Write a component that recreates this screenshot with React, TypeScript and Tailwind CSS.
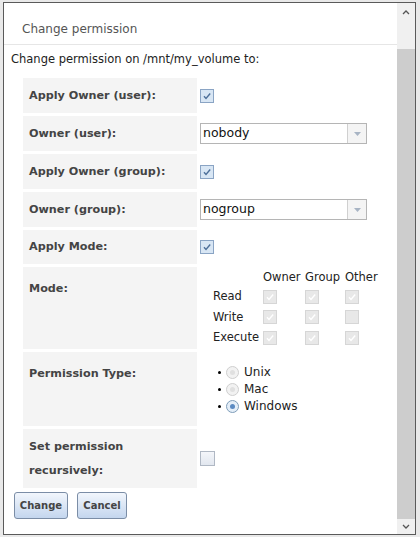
const Check = ({ on = true, dim = false }: { on?: boolean; dim?: boolean }) => (
  <span
    className={`inline-flex h-[14px] w-[14px] items-center justify-center border ${
      dim ? 'border-[#d6d6d6] bg-[#e8e8e8]' : 'border-[#8aa4c4] bg-[#d8e6f4]'
    }`}
  >
    {on && (
      <svg width="10" height="10" viewBox="0 0 10 10">
        <path d="M2 5.2l2 2.2L8.2 2.5" fill="none" stroke={dim ? '#ffffff' : '#4d6f99'} strokeWidth="1.4" />
      </svg>
    )}
  </span>
);

const Radio = ({ on = false }: { on?: boolean }) => (
  <span
    className={`inline-flex h-[13px] w-[13px] items-center justify-center rounded-full border ${
      on ? 'border-[#7f9db9] bg-[#e4eef8]' : 'border-[#cfcfcf] bg-[#f2f2f2]'
    }`}
  >
    <span className={`h-[5px] w-[5px] rounded-full ${on ? 'bg-[#5b8ac2]' : 'bg-[#e0e0e0]'}`} />
  </span>
);

const Select = ({ value }: { value: string }) => (
  <div className="flex h-[21px] w-[167px] items-center border border-[#b5b5b5] bg-white">
    <span className="flex-1 pl-[2px] text-[12.5px] text-[#111]">{value}</span>
    <span className="flex h-full w-[19px] items-center justify-center border-l border-[#d0d0d0] bg-[#f4f4f4]">
      <svg width="7" height="4" viewBox="0 0 7 4">
        <path d="M0 0h7L3.5 4z" fill="#a8b4c4" />
      </svg>
    </span>
  </div>
);

const Row = ({ label, h, top = false, children }: { label: React.ReactNode; h: number; top?: boolean; children?: React.ReactNode }) => (
  <div className="flex" style={{ height: h }}>
    <div className={`flex w-[174px] bg-[#f4f4f4] pl-[6px] text-[11.2px] font-bold leading-[24px] text-[#444] ${top ? 'items-start pt-[10px]' : 'items-center'}`}>
      {label}
    </div>
    <div className="flex flex-1 items-center pl-[3px]">{children}</div>
  </div>
);

export default function App() {
  return (
    <div className="h-[537px] w-[420px] bg-[#e9e9e9] pl-[3px] pt-[2px]" style={{ fontFamily: '"DejaVu Sans", sans-serif' }}>
      <div className="flex h-[533px] w-[413px] border border-[#5a5a5a] bg-white">
        <div className="flex flex-1 flex-col">
          <div className="h-[42px] border-b border-[#e6e6e6] pl-[18px] pt-[17px] text-[12px] text-[#555]">Change permission</div>
          <div className="pl-[7px] pt-[6px] text-[11.5px] text-[#222]">Change permission on /mnt/my_volume to:</div>
          <div className="flex flex-col gap-[3px] pl-[19px] pt-[10px]">
            <Row label="Apply Owner (user):" h={35}><Check /></Row>
            <Row label="Owner (user):" h={35}><Select value="nobody" /></Row>
            <Row label="Apply Owner (group):" h={35}><Check /></Row>
            <Row label="Owner (group):" h={35}><Select value="nogroup" /></Row>
            <Row label="Apply Mode:" h={34}><Check /></Row>
            <Row label="Mode:" h={82} top>
              <div className="grid grid-cols-[50px_42px_40px_40px] items-center gap-y-[3px] pl-[13px] text-[11.5px] text-[#222]">
                <span />
                <span className="leading-[15px]">Owner</span>
                <span className="leading-[15px]">Group</span>
                <span className="leading-[15px]">Other</span>
                <span>Read</span><Check dim /><Check dim /><Check dim />
                <span>Write</span><Check dim /><Check dim /><Check dim on={false} />
                <span>Execute</span><Check dim /><Check dim /><Check dim />
              </div>
            </Row>
            <Row label="Permission Type:" h={74} top>
              <div className="flex flex-col gap-[2px] pl-[18px] text-[12px] text-[#222]">
                {[['Unix', false], ['Mac', false], ['Windows', true]].map(([l, on]) => (
                  <div key={l as string} className="flex items-center gap-[5px] leading-[15px]">
                    <span className="h-[3px] w-[3px] rounded-full bg-black" />
                    <Radio on={on as boolean} />
                    <span>{l}</span>
                  </div>
                ))}
              </div>
            </Row>
            <Row label={<span>Set permission<br />recursively:</span>} h={59}>
              <span className="h-[15px] w-[15px] border border-[#b0b8c4] bg-gradient-to-b from-[#f4f6fa] to-[#e2e7ef]" />
            </Row>
          </div>
          <div className="flex gap-[9px] pl-[10px] pt-[4px]">
            {['Change', 'Cancel'].map((b) => (
              <button key={b} className={`h-[27px] rounded-[3px] border border-[#7b8da6] bg-gradient-to-b from-[#f2f6fc] to-[#c4d6ee] text-[10px] font-bold text-[#444] ${b === 'Change' ? 'w-[54px]' : 'w-[50px]'}`}>
                {b}
              </button>
            ))}
          </div>
        </div>
        <div className="flex w-[18px] flex-col bg-[#f0f0f0]">
          <div className="flex h-[14px] items-center justify-center pt-[4px]">
            <svg width="8" height="5" viewBox="0 0 8 5"><path d="M1 4l3-3 3 3" fill="none" stroke="#555" strokeWidth="1.3" /></svg>
          </div>
          <div className="mt-[32px] h-[470px] bg-[#cdcdcd]" />
          <div className="flex flex-1 items-center justify-center">
            <svg width="8" height="5" viewBox="0 0 8 5"><path d="M1 1l3 3 3-3" fill="none" stroke="#555" strokeWidth="1.3" /></svg>
          </div>
        </div>
      </div>
    </div>
  );
}
